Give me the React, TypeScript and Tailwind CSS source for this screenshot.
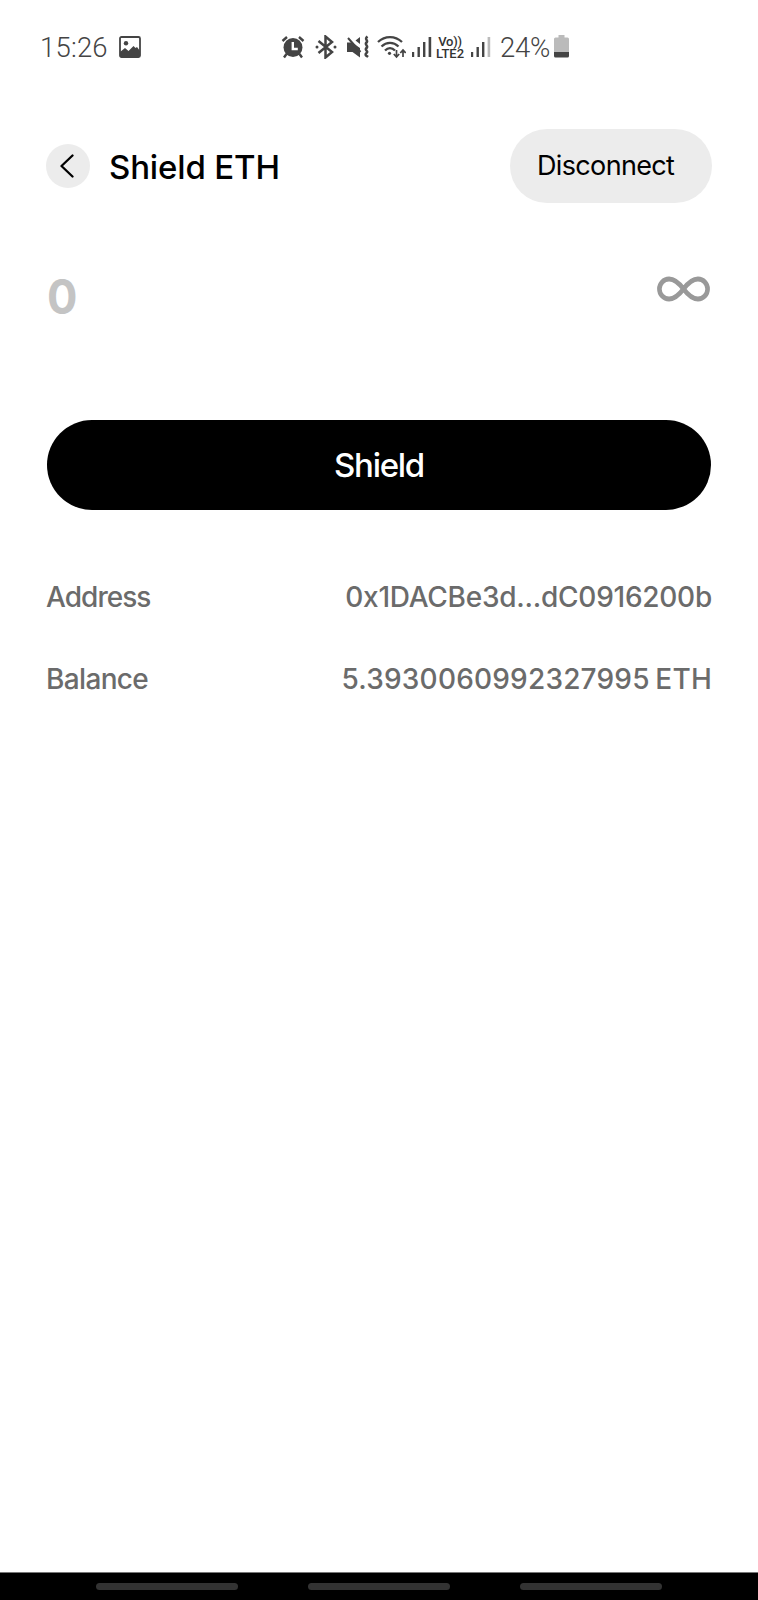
import React from "react";

const SignalIcon = ({ weak = false }: { weak?: boolean }) => (
  <svg width="20" height="22" viewBox="0 0 20 22" className="shrink-0">
    <rect x="0" y="16" width="2.2" height="5" fill="#444" />
    <rect x="5.5" y="11" width="2.4" height="10" fill="#444" />
    <rect x="11" y="6" width="2.4" height="15" fill="#444" />
    <rect x="16.6" y="1" width="2.6" height="20" fill={weak ? "#bbb" : "#444"} />
  </svg>
);

const StatusBar: React.FC = () => {
  return (
    <div className="h-[94px] flex items-center pl-10 font-[Roboto,sans-serif] text-[#444] text-[27.5px] font-light">
      <span className="w-[79px] whitespace-nowrap pt-px tracking-[0.2px]">15:26</span>
      <svg width="22" height="22" viewBox="0 0 22 22" className="shrink-0 mr-[140px]">
        <rect x="1" y="1" width="20" height="20" rx="1.5" fill="#fff" stroke="#444" strokeWidth="1.8" />
        <circle cx="7" cy="7.3" r="2.2" fill="#444" />
        <path d="M1 16l5-4 3.5 3 5-5 2 2 1.5-1L21 15v6H1z" fill="#444" />
      </svg>

      {/* alarm */}
      <svg width="24" height="24" viewBox="0 0 24 24" fill="none" className="shrink-0 mr-[10px]">
        <circle cx="12" cy="12.5" r="9.5" fill="#444" />
        <path d="M1.5 6l4.5-4M22.5 6L18 2M5.5 19l-2.5 3.5M18.5 19l2.5 3.5" stroke="#444" strokeWidth="2.4" />
        <path d="M11.8 7v7h5" stroke="#fff" strokeWidth="2.4" />
      </svg>
      {/* bluetooth */}
      <svg width="22" height="24" viewBox="0 0 22 24" fill="none" className="shrink-0 mr-[9px]">
        <path d="M3.5 6l13.500 11-6.500 5.500v-21L17 7 3.500 18" stroke="#444" strokeWidth="2.5" />
        <circle cx="2" cy="12" r="1.5" fill="#444" />
        <circle cx="20" cy="12" r="1.5" fill="#444" />
      </svg>
      {/* mute + vibrate */}
      <svg width="24" height="24" viewBox="0 0 24 24" fill="none" className="shrink-0 mr-[7px]">
        <path d="M1 7.5h5l8 5.500v9.500L6.500 17H1zM9.500 5.500l4.500-3.500v7z" fill="#444" />
        <path d="M2 3l12.5 14" stroke="#444" strokeWidth="2" />
        <path d="M21.5 1.500c-4 3 1.500 3.500-1 6s2.500 3 0 5.500 2.500 3 0 5 .5 3 1.500 4" stroke="#444" strokeWidth="2.5" />
      </svg>
      {/* wifi */}
      <svg width="29" height="24" viewBox="0 0 29 24" fill="none" className="shrink-0 mr-[6px]">
        <path d="M1 7c7-6.500 17-6.500 24 0M4.500 11.500c5-4.800 12-4.800 17 0M8 15.500c3-3 7-3 10 0" stroke="#444" strokeWidth="2.3" />
        <circle cx="12.5" cy="18.3" r="1.6" fill="#444" />
        <path d="M19.5 15v7M16.800 19l2.700 3 2.700-3M26 22v-7M23.300 18l2.700-3 2.700 3" stroke="#444" strokeWidth="1.7" />
      </svg>
      <SignalIcon />
      <div className="w-[30px] ml-[3px] mr-[6px] pt-px text-[13px] leading-[12px] font-medium text-[#333] text-center whitespace-nowrap">
        <div className="tracking-[-0.3px]">Vo))</div>
        <div>LTE2</div>
      </div>
      <SignalIcon weak />
      <span className="ml-[9px] w-[54px] whitespace-nowrap pt-px tracking-[-0.3px]">24%</span>
      <svg width="15" height="23" viewBox="0 0 15 23" className="shrink-0 -mt-0.5">
        <path d="M4.5 0h6v2.500h3q1.500 0 1.500 1.500V17H0V4q0-1.500 1.500-1.500h3z" fill="#bbb" />
        <path d="M0 17h15v4q0 1.500-1.500 1.500h-12Q0 22.500 0 21z" fill="#444" />
      </svg>
    </div>
  );
};

const InfoRow = ({ children }: { children: React.ReactNode }) => (
  <div className="flex items-center justify-between h-10 -ml-px -mr-px text-[28px] font-[450] text-[#6b6b6b] whitespace-nowrap">
    {children}
  </div>
);

const App: React.FC = () => {
  return (
    <div className="bg-white h-[1600px] w-full flex flex-col font-[Inter,sans-serif] overflow-hidden">
      <StatusBar />

      <main className="grow flex flex-col px-[47px] pt-[35px]">
        <header className="flex items-center h-[74px] -mr-px">
          <button className="size-11 -ml-px rounded-full bg-[#ececec] flex items-center justify-center pr-[2px]">
            <svg width="14" height="24" viewBox="0 0 14 24" fill="none">
              <path d="M12.5 1.500L1.500 12l11 10.500" stroke="#000" strokeWidth="2.3" strokeLinecap="round" strokeLinejoin="round" />
            </svg>
          </button>
          <h1 className="ml-[19px] pt-[3px] text-[33px] font-medium text-black whitespace-nowrap tracking-[-0.15px]">Shield ETH</h1>
          <button className="ml-auto w-[202px] h-[74px] rounded-full bg-[#ececec] pl-[27px] pt-px text-left text-[27px] text-black tracking-[-0.65px]">
            Disconnect
          </button>
        </header>

        <div className="flex items-start justify-between mt-[63px] h-[154px]">
          <span className="text-[48px] leading-[61px] font-bold text-[#c4c4c4] origin-left scale-x-[0.94]">0</span>
          <svg width="53" height="26" viewBox="0 0 55 26" preserveAspectRatio="none" fill="none" className="mt-[10px] mr-px">
            <path
              d="M27.5 13C22 6 18 3 12.500 3a10 10 0 0 0 0 20c5.500 0 9.500-3 15-10s9.500-10 15-10a10 10 0 0 1 0 20c-5.500 0-9.500-3-15-10z"
              stroke="#999"
              strokeWidth="4.8"
            />
          </svg>
        </div>

        <button className="h-[90px] w-full shrink-0 rounded-full bg-black text-white text-[33px] font-medium pt-px">
          <span className="tracking-[-1.3px]">Shield</span>
        </button>

        <div className="mt-[67px] flex flex-col gap-[42px]">
          <InfoRow>
            <span className="tracking-[-0.95px]">Address</span>
            <span className="tracking-[-0.25px]">0x1DACBe3d...dC0916200b</span>
          </InfoRow>
          <InfoRow>
            <span className="tracking-[-0.65px]">Balance</span>
            <span className="tracking-[0.2px] [word-spacing:-2px]">5.3930060992327995 ETH</span>
          </InfoRow>
        </div>
      </main>

      <footer className="h-[28px] shrink-0 bg-black border-t border-[#777] flex justify-center gap-[70px] pt-[10px]">
        <div className="w-[142px] h-[7px] rounded-full bg-[#333]" />
        <div className="w-[142px] h-[7px] rounded-full bg-[#333]" />
        <div className="w-[142px] h-[7px] rounded-full bg-[#333]" />
      </footer>
    </div>
  );
};

export default App;
